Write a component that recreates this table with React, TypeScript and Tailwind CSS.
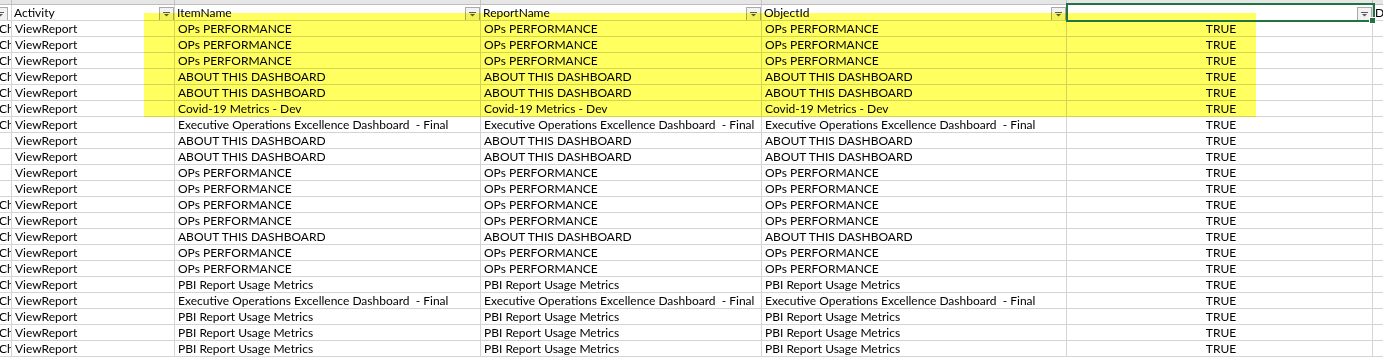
import React from "react";

const COLS = "grid grid-cols-[12px_163px_306px_281px_305px_306px_1fr]";

type Row = [boolean, string];

const rows: Row[] = [
  [true, "OPs PERFORMANCE"],
  [true, "OPs PERFORMANCE"],
  [true, "OPs PERFORMANCE"],
  [true, "ABOUT THIS DASHBOARD"],
  [true, "ABOUT THIS DASHBOARD"],
  [true, "Covid-19 Metrics - Dev"],
  [true, "Executive Operations Excellence Dashboard  - Final"],
  [false, "ABOUT THIS DASHBOARD"],
  [false, "ABOUT THIS DASHBOARD"],
  [false, "OPs PERFORMANCE"],
  [false, "OPs PERFORMANCE"],
  [true, "OPs PERFORMANCE"],
  [true, "OPs PERFORMANCE"],
  [true, "ABOUT THIS DASHBOARD"],
  [true, "OPs PERFORMANCE"],
  [true, "OPs PERFORMANCE"],
  [true, "PBI Report Usage Metrics"],
  [true, "Executive Operations Excellence Dashboard  - Final"],
  [true, "PBI Report Usage Metrics"],
  [true, "PBI Report Usage Metrics"],
  [true, "PBI Report Usage Metrics"],
];

function Arrow() {
  return (
    <svg width="7" height="5" viewBox="0 0 7 5">
      <rect x="0" y="0" width="7" height="1" fill="#5a5a5a" />
      <path d="M1 2 H6 L3.5 4.5 Z" fill="#5a5a5a" />
    </svg>
  );
}

function HCell({ label }: { label?: string }) {
  return (
    <div className="relative h-4 border-b border-r border-[#d4d4d4] pl-[2px] leading-[15px] overflow-hidden whitespace-pre">
      {label}
      <div className="absolute right-0 top-[2px] w-[15px] h-[14px] border border-[#a9a9a9] bg-[#f2f2f2] flex items-center justify-center">
        <Arrow />
      </div>
    </div>
  );
}

const cell = "h-4 border-b border-r border-[#d4d4d4] pl-[3px] leading-[16px] overflow-hidden whitespace-pre";

export default function App() {
  return (
    <div
      className="relative w-[1383px] h-[357px] overflow-hidden bg-white text-[12px] text-[#000]"
      style={{ fontFamily: "Lato, 'Liberation Sans', sans-serif" }}
    >
      {/* top band */}
      <div className={COLS + " h-[5px] bg-[#e6e6e6] border-b border-[#bdbdbd]"}>
        <div className="border-r border-[#c4c4c4]" />
        <div className="border-r border-[#c4c4c4]" />
        <div className="border-r border-[#c4c4c4]" />
        <div className="border-r border-[#c4c4c4]" />
        <div className="border-r border-[#c4c4c4]" />
        <div className="border-r border-[#c4c4c4]" />
        <div />
      </div>
      {/* header */}
      <div className={COLS + " h-4"}>
        <div className="relative h-4 border-b border-r border-[#d4d4d4] overflow-hidden">
          <div className="absolute left-[-7px] top-[2px] w-[15px] h-[14px] border border-[#a9a9a9] bg-[#f2f2f2] flex items-center justify-center">
            <Arrow />
          </div>
        </div>
        <HCell label="Activity" />
        <HCell label="ItemName" />
        <HCell label="ReportName" />
        <HCell label="ObjectId" />
        <HCell />
        <div className="h-4 border-b border-[#d4d4d4] pl-[2px] leading-[15px] overflow-hidden">D</div>
      </div>
      {/* data rows */}
      {rows.map(([ch, name], i) => (
        <div key={i} className={COLS + " h-4"}>
          <div className="h-4 border-b border-r border-[#d4d4d4] leading-[16px] overflow-hidden whitespace-pre">
            <span className="ml-[-1px]">{ch ? "Ch" : ""}</span>
          </div>
          <div className={cell}>ViewReport</div>
          <div className={cell}>{name}</div>
          <div className={cell}>{name}</div>
          <div className={cell}>{name}</div>
          <div className={cell + " text-center"}>TRUE</div>
          <div className="h-4 border-b border-[#d4d4d4]" />
        </div>
      ))}

      {/* highlighter annotation */}
      <div className="absolute left-[144px] top-[13px] w-[1112px] h-[104px] bg-[#ffff60] mix-blend-multiply pointer-events-none" />

      {/* selected cell */}
      <div className="absolute left-[1066px] top-[3px] w-[309px] h-[19px] border-2 border-[#217346] pointer-events-none" />
      <div className="absolute left-[1369px] top-[17px] w-[7px] h-[7px] bg-[#217346] border border-white pointer-events-none" />
    </div>
  );
}
